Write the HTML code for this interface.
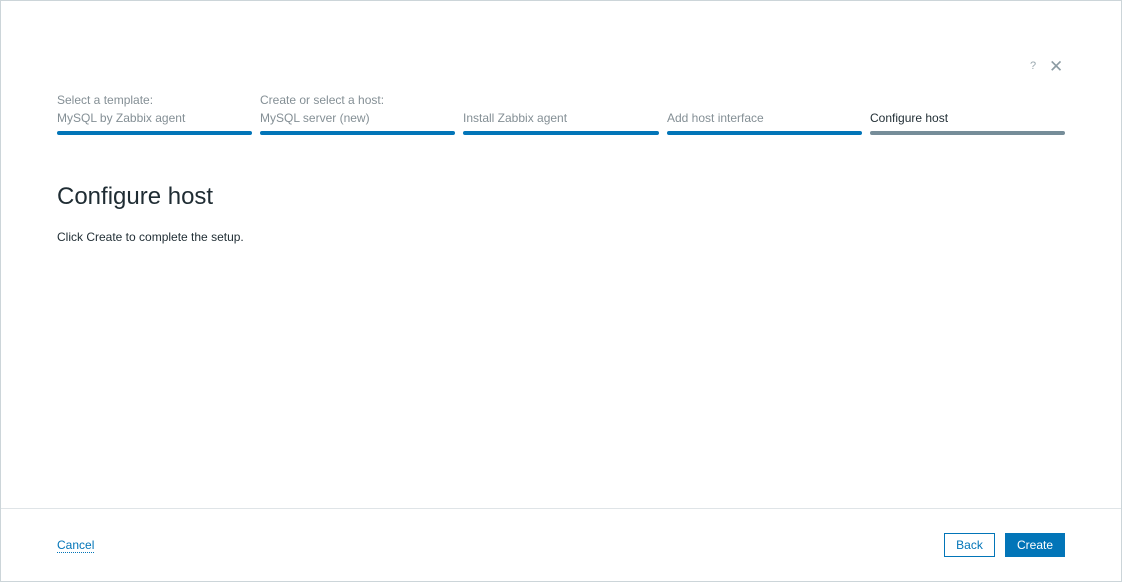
<!DOCTYPE html>
<html><head><style>
body{margin:0;width:1122px;height:582px;background:#fff;font-family:"Liberation Sans",sans-serif;position:relative;overflow:hidden}
.frame{position:absolute;left:0;top:0;width:1120px;height:580px;border:1px solid #ccd5d9}
.step{position:absolute;top:91px;width:195px;font-size:12px;color:#848f95;line-height:18px}
.step .bar{position:absolute;top:40px;left:0;width:100%;height:4px;border-radius:2px;background:#0275b8}
.t{position:absolute;font-size:12px}
</style></head><body>
<div class="frame"></div>
<div class="t" style="left:1030px;top:60px;color:#9aa8af;font-size:11px">?</div>
<div class="t" style="left:1049px;top:57px;color:#8c9ba3;font-size:17px">✕</div>
<div class="step" style="left:57px">Select a template:<br>MySQL by Zabbix agent<div class="bar"></div></div>
<div class="step" style="left:260px">Create or select a host:<br>MySQL server (new)<div class="bar"></div></div>
<div class="step" style="left:463px;width:196px"><br>Install Zabbix agent<div class="bar"></div></div>
<div class="step" style="left:667px"><br>Add host interface<div class="bar"></div></div>
<div class="step" style="left:870px;color:#1f2c33"><br>Configure host<div class="bar" style="background:#768d99"></div></div>
<div class="t" style="left:57px;top:183px;font-size:24px;color:#1f2c33">Configure host</div>
<div class="t" style="left:57px;top:230px;color:#1f2c33">Click Create to complete the setup.</div>
<div style="position:absolute;left:1px;top:508px;width:1120px;height:1px;background:#dfe4e7"></div>
<div class="t" style="left:57px;top:538px;color:#0275b8;border-bottom:1px dotted #0275b8;line-height:14px">Cancel</div>
<div class="t" style="left:944px;top:533px;width:49px;height:22px;border:1px solid #0275b8;color:#0275b8;text-align:center;line-height:22px">Back</div>
<div class="t" style="left:1005px;top:533px;width:60px;height:24px;background:#0275b8;color:#fff;text-align:center;line-height:24px">Create</div>
</body></html>
